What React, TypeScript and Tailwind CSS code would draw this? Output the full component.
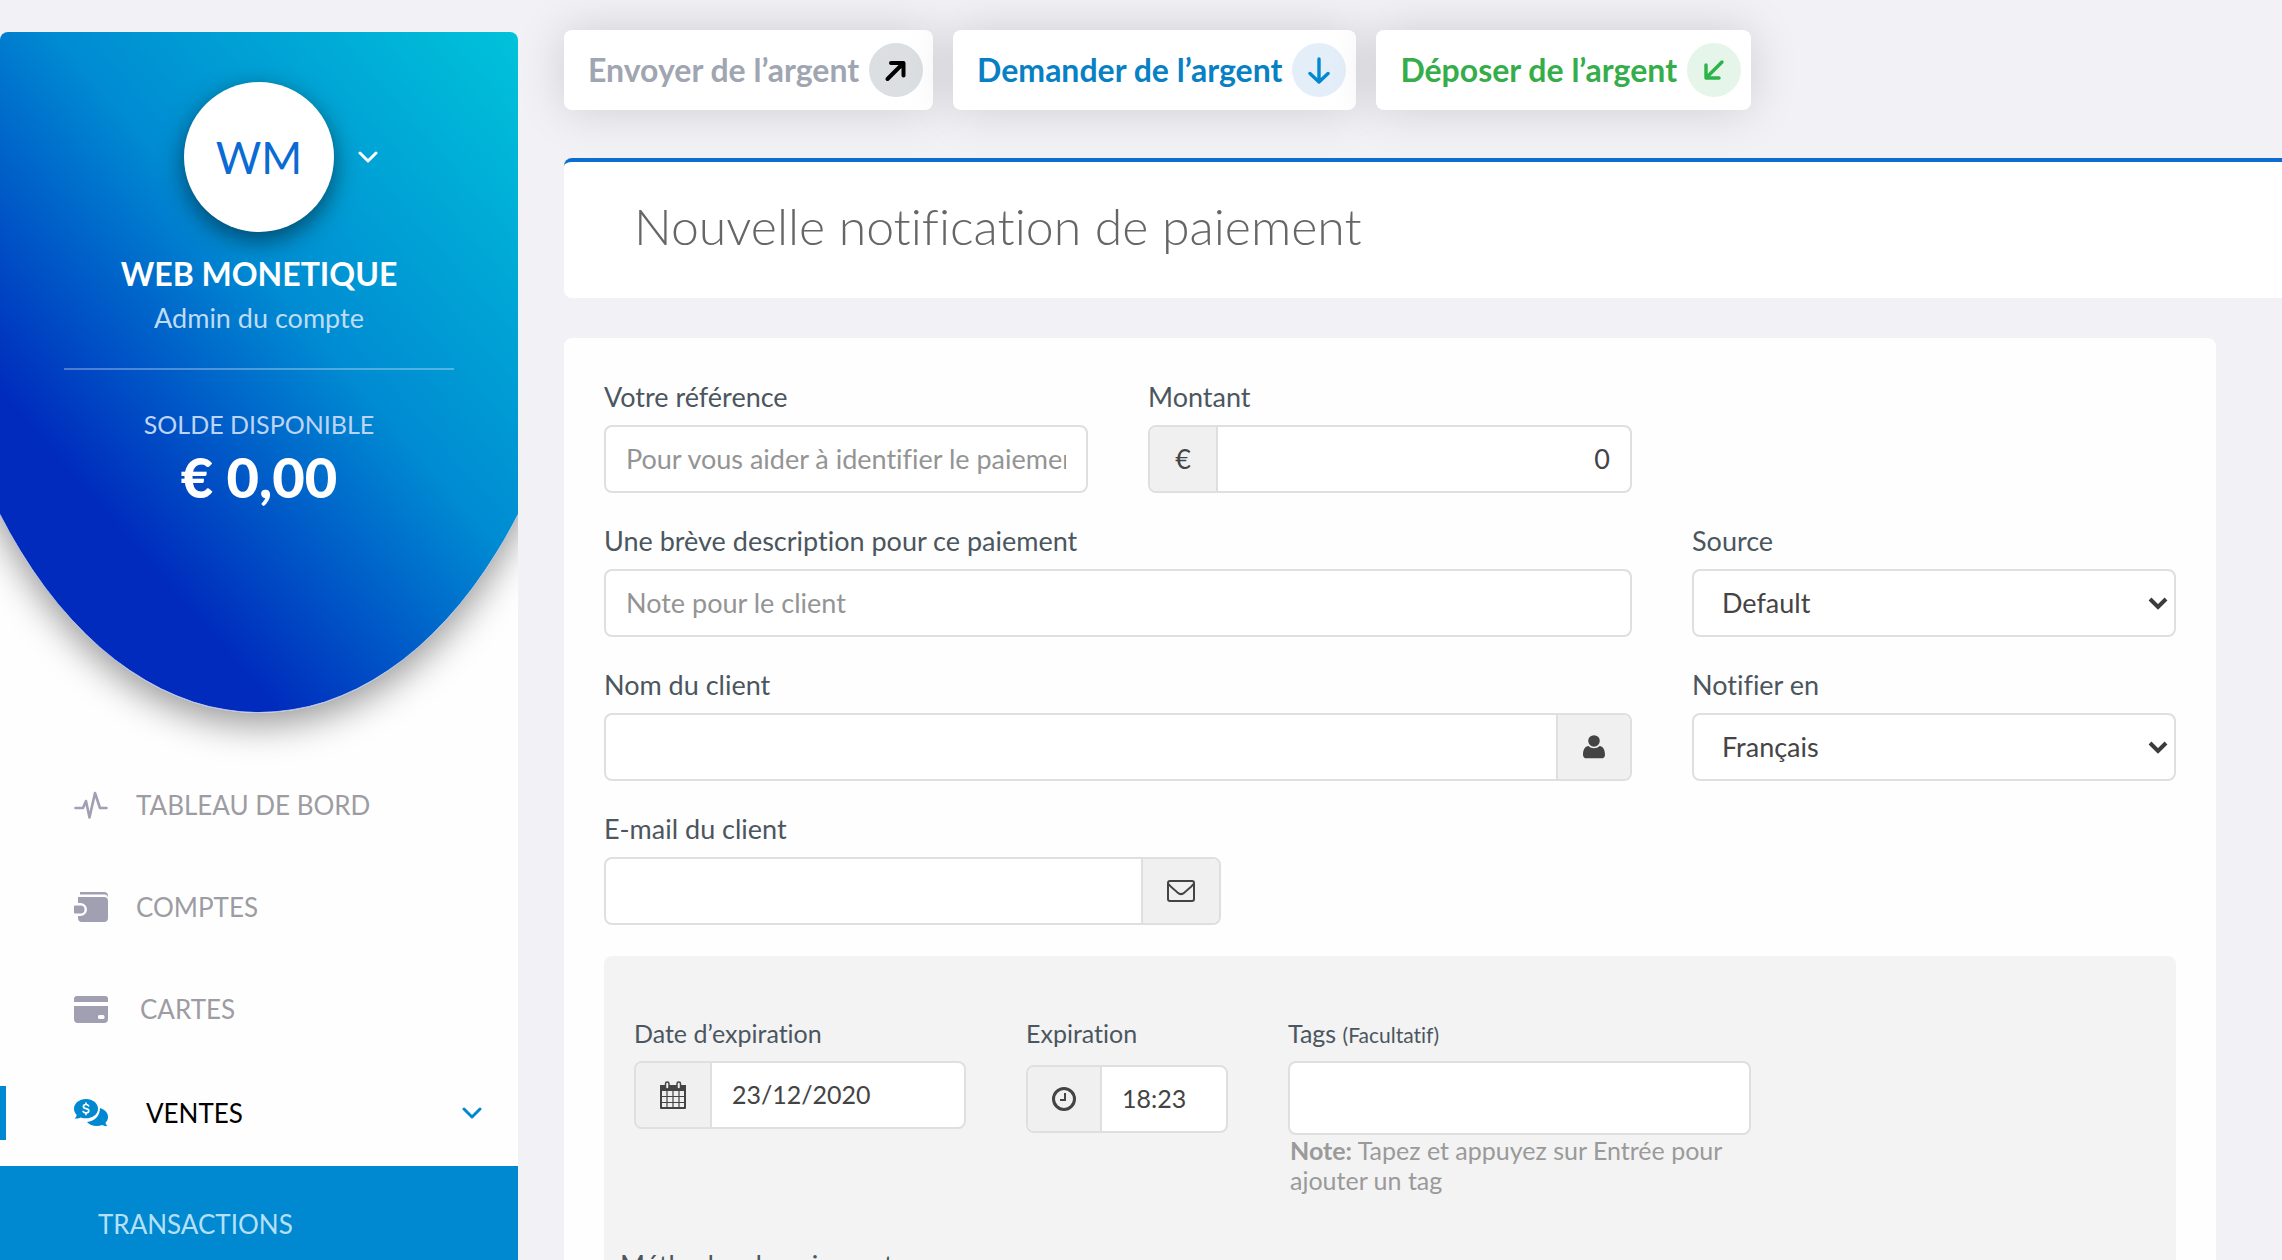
import React, { useState } from "react";

const Chevron = ({ className }: { className?: string }) => (
    <svg viewBox="0 0 20 12" fill="none" stroke="currentColor" strokeWidth="3" strokeLinecap="round" strokeLinejoin="round" className={className} aria-hidden="true">
        <path d="M2 2l8 8 8-8" />
    </svg>
);

const PulseIcon = () => (
    <svg viewBox="0 0 34 28" fill="none" stroke="currentColor" strokeWidth="2.6" strokeLinejoin="round" strokeLinecap="round" className="w-[34px]" aria-hidden="true">
        <path d="M1.5 17H9l3-7 3.5 16.5L21 2l5 15h6.5" />
    </svg>
);

const WalletIcon = () => (
    <svg viewBox="0 0 34 30" fill="currentColor" className="w-[34px]" aria-hidden="true">
        <path d="M6 0h24a4 4 0 0 1 4 4v3a4 4 0 0 0-3-4.500H6z" />
        <path d="M4 5h26a4 4 0 0 1 4 4v17a4 4 0 0 1-4 4H8a4 4 0 0 1-4-4v-2h2.500a6.500 6.500 0 0 0 0-13H4z" />
        <path d="M1 13.500h5.500a4 4 0 0 1 0 8H1a1 1 0 0 1-1-1v-6a1 1 0 0 1 1-1z" />
    </svg>
);

const CardIcon = () => (
    <svg viewBox="0 0 34 27" fill="currentColor" className="w-[34px]" aria-hidden="true">
        <path d="M3 0h28a3 3 0 0 1 3 3v3H0V3a3 3 0 0 1 3-3z" />
        <path fillRule="evenodd" d="M0 10h34v13a4 4 0 0 1-4 4H4a4 4 0 0 1-4-4zM25.500 19a1.500 1.500 0 0 0-1.500 1.500v1a1.500 1.500 0 0 0 1.500 1.500h3.500a1.500 1.500 0 0 0 1.500-1.500v-1a1.500 1.500 0 0 0-1.500-1.500z" />
    </svg>
);

const SalesIcon = () => (
    <svg viewBox="0 0 34 28" className="w-[34px]" aria-hidden="true">
        <path fill="currentColor" d="M26 9c5 1.500 8 5 8 9 0 2.300-1 4.300-2.500 5.800.3 1.400 1 2.600 2 3.200-1.800.4-3.800 0-5.200-.9-5.500 2-12 1-15.300-3.100C20 22.500 26 17.500 26 9z" />
        <path fill="currentColor" d="M12 0c6.700 0 12 4.300 12 9.700s-5.300 9.600-12 9.600c-1.900 0-3.700-.3-5.200-.9-1.700.9-4.500 1.400-6.300.9 1.200-.8 2-2 2.200-3.400C1 14.200 0 12 0 9.700 0 4.300 5.300 0 12 0z" />
        <path fill="none" stroke="#fff" strokeWidth="1.700" strokeLinecap="round" d="M14.600 6.800c-.5-.9-1.500-1.300-2.600-1.300-1.500 0-2.600.8-2.600 2s1 1.800 2.600 2.100 2.800.9 2.800 2.200-1.200 2.100-2.800 2.100c-1.300 0-2.400-.5-2.900-1.500M12 4v1.500M12 13.900v1.500" />
    </svg>
);

const UserIcon = () => (
    <svg viewBox="0 0 24 26" fill="currentColor" className="w-[22px]" aria-hidden="true">
        <circle cx="12" cy="6.500" r="6.300" />
        <path d="M6 12c-4.500.5-6 5-6 9.500C0 24 1.500 25.500 4 25.500h16c2.500 0 4-1.500 4-4 0-4.500-1.500-9-6-9.500-1.600 1.500-3.700 2.500-6 2.500S7.600 13.500 6 12z" />
    </svg>
);

const MailIcon = () => (
    <svg viewBox="0 0 28 22" fill="none" stroke="currentColor" strokeWidth="2" strokeLinejoin="round" className="w-7" aria-hidden="true">
        <rect x="1" y="1" width="26" height="20" rx="2" />
        <path d="M1.500 4c2 3 6 5.500 9 8.500 2.500 2.300 4.500 2.300 7 0 3-3 7-5.500 9-8.500" />
    </svg>
);

const CalendarIcon = () => (
    <svg viewBox="0 0 26 28" fill="none" stroke="currentColor" className="w-[26px]" aria-hidden="true">
        <path strokeWidth="2" strokeLinejoin="round" d="M1 5h24v22H1z" />
        <path fill="currentColor" stroke="none" d="M0 4h26v6H0z" />
        <path strokeWidth="1.200" d="M7 10v17M13 10v17M19 10v17M1 15.500h24M1 21.500h24" />
        <rect x="5.500" y="1" width="3.500" height="7" rx="1.700" fill="#f0f0f0" strokeWidth="1.500" />
        <rect x="17" y="1" width="3.500" height="7" rx="1.700" fill="#f0f0f0" strokeWidth="1.500" />
    </svg>
);

const ClockIcon = () => (
    <svg viewBox="0 0 24 24" fill="none" stroke="currentColor" className="w-6" aria-hidden="true">
        <circle cx="12" cy="12" r="10.500" strokeWidth="3" />
        <path strokeWidth="2" d="M13 6v7H8" />
    </svg>
);

const ACTIONS = [
    { label: "Envoyer de l’argent", text: "text-[#9fa5b1]", circle: "bg-[#dcdfe2] text-black", path: "M4.500 22L20 6.500M8 6H20.500V18.500", width: "4" },
    { label: "Demander de l’argent", text: "text-[#0880c4]", circle: "bg-[#e4eef9] text-[#0088d0]", path: "M13 2v23M4 16.500l9 8.500 9-8.500", width: "3.400" },
    { label: "Déposer de l’argent", text: "text-[#35ad4a]", circle: "bg-[#e6f5e9] text-[#2cb34a]", path: "M21 5L6 20M5 8v13h13", width: "3.400" },
];

const NAV = [
    { label: "TABLEAU DE BORD", Icon: PulseIcon, gap: "gap-7" },
    { label: "COMPTES", Icon: WalletIcon, gap: "gap-7" },
    { label: "CARTES", Icon: CardIcon, gap: "gap-8" },
];

const fieldBox = "flex h-[68px] overflow-hidden rounded-lg border-2 border-[#dfdfdf] bg-white";
const addon = "flex shrink-0 items-center justify-center border-[#dfdfdf] bg-[#f0f0f0] text-[#444]";
const input = "min-w-0 flex-1 bg-transparent px-5 text-[#444] outline-none placeholder:text-[#949494]";
const labelText = "mb-2 block leading-10 text-[#4b565e]";

const SelectField = ({ id, label, options }: { id: string; label: string; options: string[] }) => (
    <div>
        <label htmlFor={id} className={labelText}>{label}</label>
        <div className="relative">
            <select id={id} className="h-[68px] w-full appearance-none rounded-lg border-2 border-[#dfdfdf] bg-white px-7 text-[#444] outline-none">
                {options.map((option) => (
                    <option key={option}>{option}</option>
                ))}
            </select>
            <svg viewBox="0 0 20 13" fill="none" stroke="#3c3c3c" strokeWidth="4" className="pointer-events-none absolute top-7 right-2 w-5" aria-hidden="true">
                <path d="M2 2l8 8 8-8" />
            </svg>
        </div>
    </div>
);

const Sidebar = () => (
    <aside className="mt-8 flex w-[518px] shrink-0 flex-col overflow-hidden rounded-t-lg bg-[#fefefe]">
        <div className="-mx-[15%] flex h-[681px] shrink-0 flex-col items-center rounded-[0_0_50%_50%/0_0_81%_81%] border-b border-[#b9c6ee] bg-[linear-gradient(229deg,#00c3da_6%,#008bd2_43%,#002bbd_72%)] pt-[50px] text-white shadow-[0_12px_36px_rgba(0,0,0,0.4)]">
            <div className="grid grid-cols-[1fr_auto_1fr] items-center gap-6">
                <span className="w-5" />
                <div className="flex size-[150px] items-center justify-center rounded-full bg-white text-[44px] text-[#0a6bd3] shadow-[0_8px_24px_rgba(0,0,0,0.5)]">WM</div>
                <button type="button" aria-label="Ouvrir le menu du compte">
                    <Chevron className="w-5" />
                </button>
            </div>
            <p className="mt-[22px] text-[32px] leading-10 font-bold">WEB MONETIQUE</p>
            <p className="mt-1 text-[27px] leading-10 text-[#bfdcf6]">Admin du compte</p>
            <hr className="mt-[30px] w-[390px] border-t-2 border-white/30" />
            <p className="mt-[34px] text-[25px] leading-10 text-[#bcd4f5]">SOLDE DISPONIBLE</p>
            <p className="text-[56px] leading-[66px] font-black">€ 0,00</p>
        </div>
        <nav className="mt-[41px] flex flex-1 flex-col text-[26px]">
            {NAV.map(({ label, Icon, gap }) => (
                <a key={label} href="#" className={`flex h-[102px] shrink-0 items-center pl-[74px] text-[#a19fb2] ${gap}`}>
                    <Icon />
                    <span className="text-[#9d9ca3]">{label}</span>
                </a>
            ))}
            <a href="#" className="flex h-[106px] shrink-0 items-center text-[#0088d0]">
                <span className="h-[54px] w-1.5 bg-[#0088d0]" />
                <span className="ml-[68px]"><SalesIcon /></span>
                <span className="ml-[38px] flex-1 text-black">VENTES</span>
                <Chevron className="mr-9 w-5" />
            </a>
            <div className="flex-1 bg-[#0088d0] pt-[38px] pl-[98px]">
                <a href="#" className="leading-10 text-[#b5e0f7]">TRANSACTIONS</a>
            </div>
        </nav>
    </aside>
);

const App = () => {
    const [date, setDate] = useState("23/12/2020");
    const [time, setTime] = useState("18:23");
    const [amount, setAmount] = useState("0");

    return (
        <div className="flex h-screen overflow-hidden bg-[#f1f1f6] font-['Lato',sans-serif] text-[27px] [font-variant-ligatures:none]">
            <Sidebar />
            <main className="ml-[46px] min-w-0 flex-1 pt-[30px]">
                <div className="flex gap-5">
                    {ACTIONS.map((action) => (
                        <button key={action.label} type="button" className={`flex h-20 items-center gap-2.5 rounded-lg bg-white pr-2.5 pl-6 text-[32px] font-bold whitespace-nowrap shadow-[0_0_48px_rgba(0,0,0,0.15)] ${action.text}`}>
                            {action.label}
                            <span className={`flex size-[54px] items-center justify-center rounded-full ${action.circle}`}>
                                <svg viewBox="0 0 26 27" fill="none" stroke="currentColor" strokeWidth={action.width} strokeLinecap="round" strokeLinejoin="round" className="w-[26px]" aria-hidden="true">
                                    <path d={action.path} />
                                </svg>
                            </span>
                        </button>
                    ))}
                </div>

                <header className="mt-12 flex h-[140px] items-center rounded-l-lg border-t-4 border-[#0b6dcf] bg-white pb-2 pl-[70px]">
                    <h1 className="text-[50px] font-light text-[#666]">Nouvelle notification de paiement</h1>
                </header>

                <form className="mt-10 mr-[66px] rounded-lg bg-[#fefefe] px-10 pt-[39px] pb-10">
                    <div className="grid grid-cols-3 gap-x-[60px] gap-y-7">
                        <div>
                            <label htmlFor="reference" className={labelText}>Votre référence</label>
                            <div className={`${fieldBox} px-5`}>
                                <input id="reference" className="min-w-0 flex-1 bg-transparent text-[#444] outline-none placeholder:text-[#949494]" placeholder="Pour vous aider à identifier le paiement" />
                            </div>
                        </div>
                        <div>
                            <label htmlFor="amount" className={labelText}>Montant</label>
                            <div className={fieldBox}>
                                <span className={`${addon} w-[68px] border-r-2`}>€</span>
                                <input id="amount" className={`${input} text-right`} value={amount} onChange={(e) => setAmount(e.target.value)} />
                            </div>
                        </div>
                        <div className="col-span-2">
                            <label htmlFor="description" className={labelText}>Une brève description pour ce paiement</label>
                            <div className={fieldBox}>
                                <input id="description" className={input} placeholder="Note pour le client" />
                            </div>
                        </div>
                        <SelectField id="source" label="Source" options={["Default"]} />
                        <div className="col-span-2">
                            <label htmlFor="name" className={labelText}>Nom du client</label>
                            <div className={fieldBox}>
                                <input id="name" className={input} />
                                <span className={`${addon} w-[74px] border-l-2`}><UserIcon /></span>
                            </div>
                        </div>
                        <SelectField id="language" label="Notifier en" options={["Français", "English"]} />
                        <div className="col-span-2">
                            <label htmlFor="email" className={labelText}>E-mail du client</label>
                            <div className={`${fieldBox} w-3/5`}>
                                <input id="email" type="email" className={input} />
                                <span className={`${addon} w-[78px] border-l-2`}><MailIcon /></span>
                            </div>
                        </div>
                    </div>

                    <div className="mt-[31px] rounded-lg bg-[#f3f3f3] pt-[57px] pb-10 text-[25px]">
                        <div className="grid h-[232px] grid-cols-[332fr_202fr_463fr_335fr] items-start gap-[60px] px-[30px]">
                            <div className="min-w-0">
                                <label htmlFor="date" className={labelText}>Date d’expiration</label>
                                <div className={fieldBox}>
                                    <span className={`${addon} w-[76px] border-r-2`}><CalendarIcon /></span>
                                    <input id="date" className={input} value={date} onChange={(e) => setDate(e.target.value)} />
                                </div>
                            </div>
                            <div className="min-w-0">
                                <label htmlFor="time" className="mb-3 block leading-10 text-[#4b565e]">Expiration</label>
                                <div className={fieldBox}>
                                    <span className={`${addon} w-[74px] border-r-2`}><ClockIcon /></span>
                                    <input id="time" className={input} value={time} onChange={(e) => setTime(e.target.value)} />
                                </div>
                            </div>
                            <div className="min-w-0">
                                <label htmlFor="tags" className={labelText}>Tags <span className="text-[21px] leading-none">(Facultatif)</span></label>
                                <input id="tags" className="block h-[74px] w-full rounded-lg border-2 border-[#dfdfdf] bg-white px-5 outline-none" />
                                <p className="ml-0.5 leading-[30px] text-[#9a9a9a]"><b>Note:</b> Tapez et appuyez sur Entrée pour ajouter un tag</p>
                            </div>
                        </div>
                        <h2 className="px-4 text-[27px] leading-10 text-[#4b565e]">Méthodes de paiement</h2>
                    </div>
                </form>
            </main>
        </div>
    );
};

export default App;
